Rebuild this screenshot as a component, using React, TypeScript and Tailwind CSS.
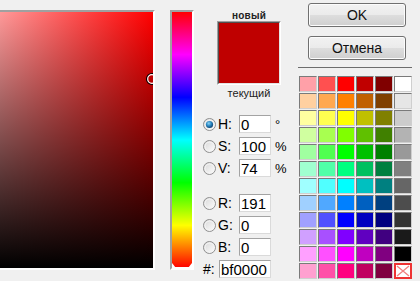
import React from "react";

const palette: (string | null)[][] = [
  ["#ffa0a8", "#ff5050", "#ff0000", "#c00000", "#800000", "#ffffff"],
  ["#ffd0a0", "#ffa850", "#ff8000", "#c06000", "#804000", "#e6e6e6"],
  ["#ffffa0", "#ffff50", "#ffff00", "#c0c000", "#808000", "#cccccc"],
  ["#d0ffa0", "#a8ff50", "#80ff00", "#60c000", "#408000", "#b3b3b3"],
  ["#a0ffa0", "#50ff50", "#00ff00", "#00c000", "#008000", "#999999"],
  ["#a0ffd0", "#50ffa8", "#00ff80", "#00c060", "#008040", "#808080"],
  ["#a0ffff", "#50ffff", "#00ffff", "#00c0c0", "#008080", "#666666"],
  ["#a0d0ff", "#50a8ff", "#0080ff", "#0060c0", "#004080", "#4d4d4d"],
  ["#a0a0ff", "#5050ff", "#0000ff", "#0000c0", "#000080", "#333333"],
  ["#d0a0ff", "#a850ff", "#8000ff", "#6000c0", "#400080", "#1a1a1a"],
  ["#ffa0ff", "#ff50ff", "#ff00ff", "#c000c0", "#800080", "#000000"],
  ["#ffa0d0", "#ff50a8", "#ff0080", "#c00060", "#800040", null],
];

function Radio({ checked }: { checked?: boolean }) {
  return (
    <svg width="13" height="13" viewBox="0 0 13 13" className="shrink-0">
      <defs>
        <linearGradient id="rbg" x1="0" y1="0" x2="1" y2="1">
          <stop offset="0" stopColor="#d6d6d6" />
          <stop offset="1" stopColor="#ffffff" />
        </linearGradient>
        <radialGradient id="rdot" cx="0.4" cy="0.35" r="0.7">
          <stop offset="0" stopColor="#8ad3f5" />
          <stop offset="0.5" stopColor="#2a87c2" />
          <stop offset="1" stopColor="#0b3a66" />
        </radialGradient>
      </defs>
      <circle cx="6.5" cy="6.5" r="6" fill="url(#rbg)" stroke="#8f8f8f" strokeWidth="1" />
      <circle cx="6.5" cy="6.5" r="4.5" fill="none" stroke="#f4f4f4" strokeWidth="1" />
      {checked && <circle cx="6.5" cy="6.5" r="3.6" fill="url(#rdot)" />}
    </svg>
  );
}

function Field({ value, w }: { value: string; w: string }) {
  return (
    <div
      className={`${w} h-[18px] bg-white border border-t-[#a3a3a3] border-l-[#a3a3a3] border-r-[#dadada] border-b-[#dadada] pl-[1px] flex items-center text-[15px] leading-none text-black`}
    >
      {value}
    </div>
  );
}

function Row({ label, value, unit, checked }: { label: string; value: string; unit?: string; checked?: boolean }) {
  return (
    <div className="flex items-center h-[18px]">
      <Radio checked={checked} />
      <div className="w-[22px] ml-[1px] pl-[1px] text-[14px] leading-none text-black">{label}</div>
      <Field value={value} w="w-[32px]" />
      <div className="ml-[4px] text-[13px] leading-none text-black">{unit}</div>
    </div>
  );
}

function Button({ children }: { children: React.ReactNode }) {
  return (
    <div className="w-[98px] h-[24px] rounded-[3px] border border-[#707070] bg-[linear-gradient(to_bottom,#f2f2f2_0%,#ebebeb_48%,#dddddd_52%,#cfcfcf_100%)] flex items-center justify-center text-[14px] text-[#111] shadow-[inset_0_0_0_1px_#fcfcfc]">
      {children}
    </div>
  );
}

export default function App() {
  return (
    <div
      className="w-[420px] h-[281px] bg-[#f0f0f0] flex overflow-hidden"
      style={{ fontFamily: '"Liberation Sans", Arial, sans-serif' }}
    >
      {/* SV square */}
      <div className="mt-[10px] relative w-[155px] h-[260px] overflow-hidden shrink-0 border-t-2 border-t-[#a0a0a0] border-r-2 border-r-white border-b-2 border-b-white">
        <div className="w-[153px] h-[256px] bg-[linear-gradient(to_top,#000000,rgba(0,0,0,0)),linear-gradient(to_right,#ff9999,#ff0000)]" />
        <svg className="absolute left-[145px] top-[60px]" width="14" height="14" viewBox="0 0 14 14">
          <circle cx="7" cy="7" r="5.5" fill="none" stroke="#000" strokeWidth="1.2" />
          <circle cx="7" cy="7" r="4.3" fill="none" stroke="#fff" strokeWidth="1.2" />
        </svg>
      </div>

      {/* Hue bar */}
      <div className="ml-[15px] mt-[10px] relative w-[24px] h-[260px] shrink-0 border-t-2 border-l-2 border-t-[#a0a0a0] border-l-[#a0a0a0] border-r-2 border-b-2 border-r-white border-b-white">
        <div className="w-[20px] h-[256px] bg-[linear-gradient(to_bottom,#ff0000,#ff00ff,#0000ff,#00ffff,#00ff00,#ffff00,#ff0000)]" />
        <svg className="absolute left-0 bottom-0" width="20" height="6" viewBox="0 0 20 6">
          <path d="M0 1 L4 6 L0 6 Z" fill="#fff" />
          <path d="M20 1 L16 6 L20 6 Z" fill="#fff" />
          <path d="M0 5 L20 5 L20 6 L0 6 Z" fill="#fff" />
        </svg>
      </div>

      {/* Middle column */}
      <div className="w-[104px] shrink-0 flex flex-col">
        <div className="ml-[23px] w-[64px] flex flex-col items-center">
          <div className="mt-[11px] h-[10px] text-[10px] leading-[10px] text-[#222] font-bold tracking-[0.2px]">новый</div>
          <div className="w-[64px] h-[64px] border-t border-l border-t-[#a0a0a0] border-l-[#a0a0a0] border-r border-b border-r-white border-b-white">
            <div className="w-full h-full border-t border-l border-t-[#505050] border-l-[#505050] border-r border-b border-r-[#e3e3e3] border-b-[#e3e3e3] flex flex-col">
              <div className="flex-1 bg-[#bf0000]" />
              <div className="flex-1 bg-[#bf0000]" />
            </div>
          </div>
          <div className="mt-[2px] h-[12px] text-[11px] leading-[12px] text-[#222]">текущий</div>
        </div>

        <div className="ml-[9px] mt-[16px] flex flex-col gap-[4px]">
          <Row label="H:" value="0" unit="°" checked />
          <Row label="S:" value="100" unit="%" />
          <Row label="V:" value="74" unit="%" />
          <div className="h-[9px]" />
          <Row label="R:" value="191" />
          <Row label="G:" value="0" />
          <Row label="B:" value="0" />
          <div className="flex items-center h-[18px]">
            <div className="w-[16px] text-[14px] leading-none text-black">#:</div>
            <Field value="bf0000" w="w-[52px]" />
          </div>
        </div>
      </div>

      {/* Right column */}
      <div className="flex-1 flex flex-col">
        <div className="ml-[10px] mt-[3px]">
          <Button>OK</Button>
        </div>
        <div className="ml-[10px] mt-[9px]">
          <Button>Отмена</Button>
        </div>
        <div className="mt-[7px] w-[114px] h-[1px] bg-[#6d6d6d]" />
        <div className="mt-[8px] ml-[1px] grid grid-cols-[repeat(6,18px)] auto-rows-[16px] gap-[1px]">
          {palette.flat().map((c, i) =>
            c ? (
              <div
                key={i}
                className="border border-t-[#7a7a7a] border-l-[#7a7a7a] border-r-[#cfcfcf] border-b-[#cfcfcf]"
                style={{ backgroundColor: c }}
              />
            ) : (
              <div key={i} className="border-2 border-[#e33] bg-white">
                <svg width="14" height="12" viewBox="0 0 14 12" className="block">
                  <path d="M1 1 L13 11 M13 1 L1 11" stroke="#f08080" strokeWidth="1.3" />
                </svg>
              </div>
            )
          )}
        </div>
      </div>
    </div>
  );
}
